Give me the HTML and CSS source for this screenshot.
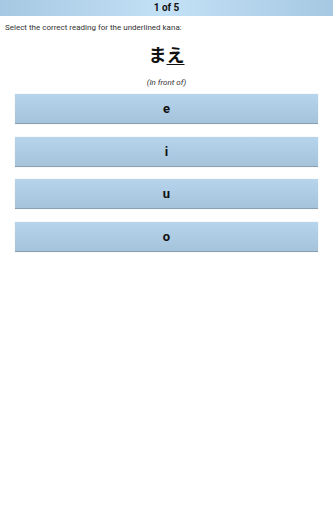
FILE: index.html
```html
<!DOCTYPE html>
<html>
<head>
<meta charset="utf-8">
<link rel="stylesheet" href="styles.css">
</head>
<body>
<div class="header">1 of 5</div>
<div class="prompt">Select the correct reading for the underlined kana:</div>
<div class="kana">ま<span class="ul">え</span></div>
<div class="meaning">(In front of)</div>
<div class="answers">
  <div class="answer">e</div>
  <div class="answer">i</div>
  <div class="answer">u</div>
  <div class="answer">o</div>
</div>
</body>
</html>
```
FILE: styles.css
```css
html, body {
  margin: 0;
  padding: 0;
  background: #ffffff;
  width: 333px;
  height: 512px;
  overflow: hidden;
  font-family: Roboto, "Noto Sans CJK JP", sans-serif;
}
.header {
  height: 16px;
  line-height: 16px;
  text-align: center;
  font-weight: bold;
  font-size: 10px;
  color: #111;
  background: linear-gradient(to right, #a6c8e2 0%, #c3e1f6 50%, #a6c8e2 100%);
}
.prompt {
  padding: 6px 0 0 5px;
  font-size: 8px;
  line-height: 11px;
  color: #333;
}
.kana {
  margin-top: 9px;
  text-align: center;
  font-family: "Noto Sans CJK JP", sans-serif;
  font-weight: 700;
  font-size: 18px;
  line-height: 24px;
  color: #111;
}
.ul {
  text-decoration: underline;
  text-decoration-thickness: 1px;
  text-underline-offset: 2px;
}
.meaning {
  margin-top: 11px;
  text-align: center;
  font-style: italic;
  font-size: 8px;
  line-height: 11px;
  color: #333;
}
.answers {
  margin: 6px 15px 0 15px;
  display: flex;
  flex-direction: column;
  gap: 12.67px;
}
.answer {
  height: 29px;
  line-height: 30px;
  text-align: center;
  font-weight: bold;
  font-size: 13px;
  color: #111;
  background: linear-gradient(to bottom, #b6d5ec 0%, #a5c3da 100%);
  border-bottom: 1px solid #8aa0b3;
  box-shadow: 0 0 1px rgba(0,0,0,0.15);
}
```
